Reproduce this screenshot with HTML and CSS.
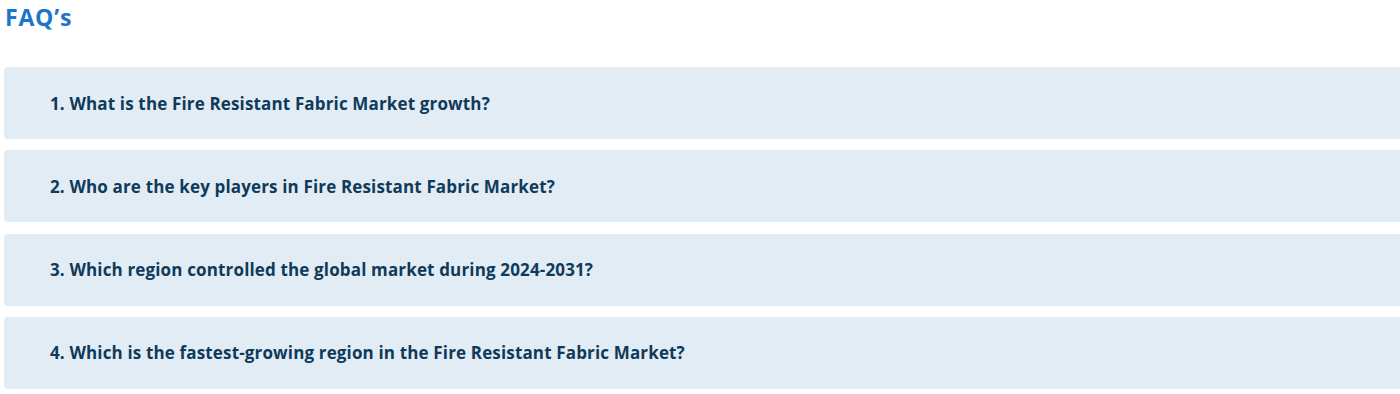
FILE: index.html
```html
<!DOCTYPE html>
<html>
<head>
<meta charset="utf-8">
<link rel="stylesheet" href="styles.css">
</head>
<body>
<section class="faq">
  <h2 class="faq-title">FAQ’s</h2>
  <div class="faq-list">
    <div class="faq-item"><span class="faq-q">1. What is the Fire Resistant Fabric Market growth?</span></div>
    <div class="faq-item"><span class="faq-q">2. Who are the key players in Fire Resistant Fabric Market?</span></div>
    <div class="faq-item"><span class="faq-q">3. Which region controlled the global market during 2024-2031?</span></div>
    <div class="faq-item"><span class="faq-q">4. Which is the fastest-growing region in the Fire Resistant Fabric Market?</span></div>
  </div>
</section>
</body>
</html>
```
FILE: styles.css
```css
html, body {
  margin: 0;
  padding: 0;
  background: #ffffff;
  overflow: hidden;
}
body {
  font-family: "Open Sans", Lato, sans-serif;
}
.faq {
  padding: 3px 0 0 4px;
  width: 1420px;
}
.faq-title {
  margin: 0 0 0 1px;
  font-size: 23px;
  line-height: 29px;
  font-weight: 700;
  letter-spacing: 0.8px;
  color: #1b75c9;
}
.faq-list {
  margin-top: 35px;
  display: flex;
  flex-direction: column;
  gap: 11.3px;
}
.faq-item {
  background: #e2ecf5;
  border-radius: 4px;
  height: 72px;
  display: flex;
  align-items: center;
  padding-left: 46px;
}
.faq-q {
  font-size: 17px;
  font-weight: 700;
  letter-spacing: 0.15px;
  color: #0f3a5a;
}
```
